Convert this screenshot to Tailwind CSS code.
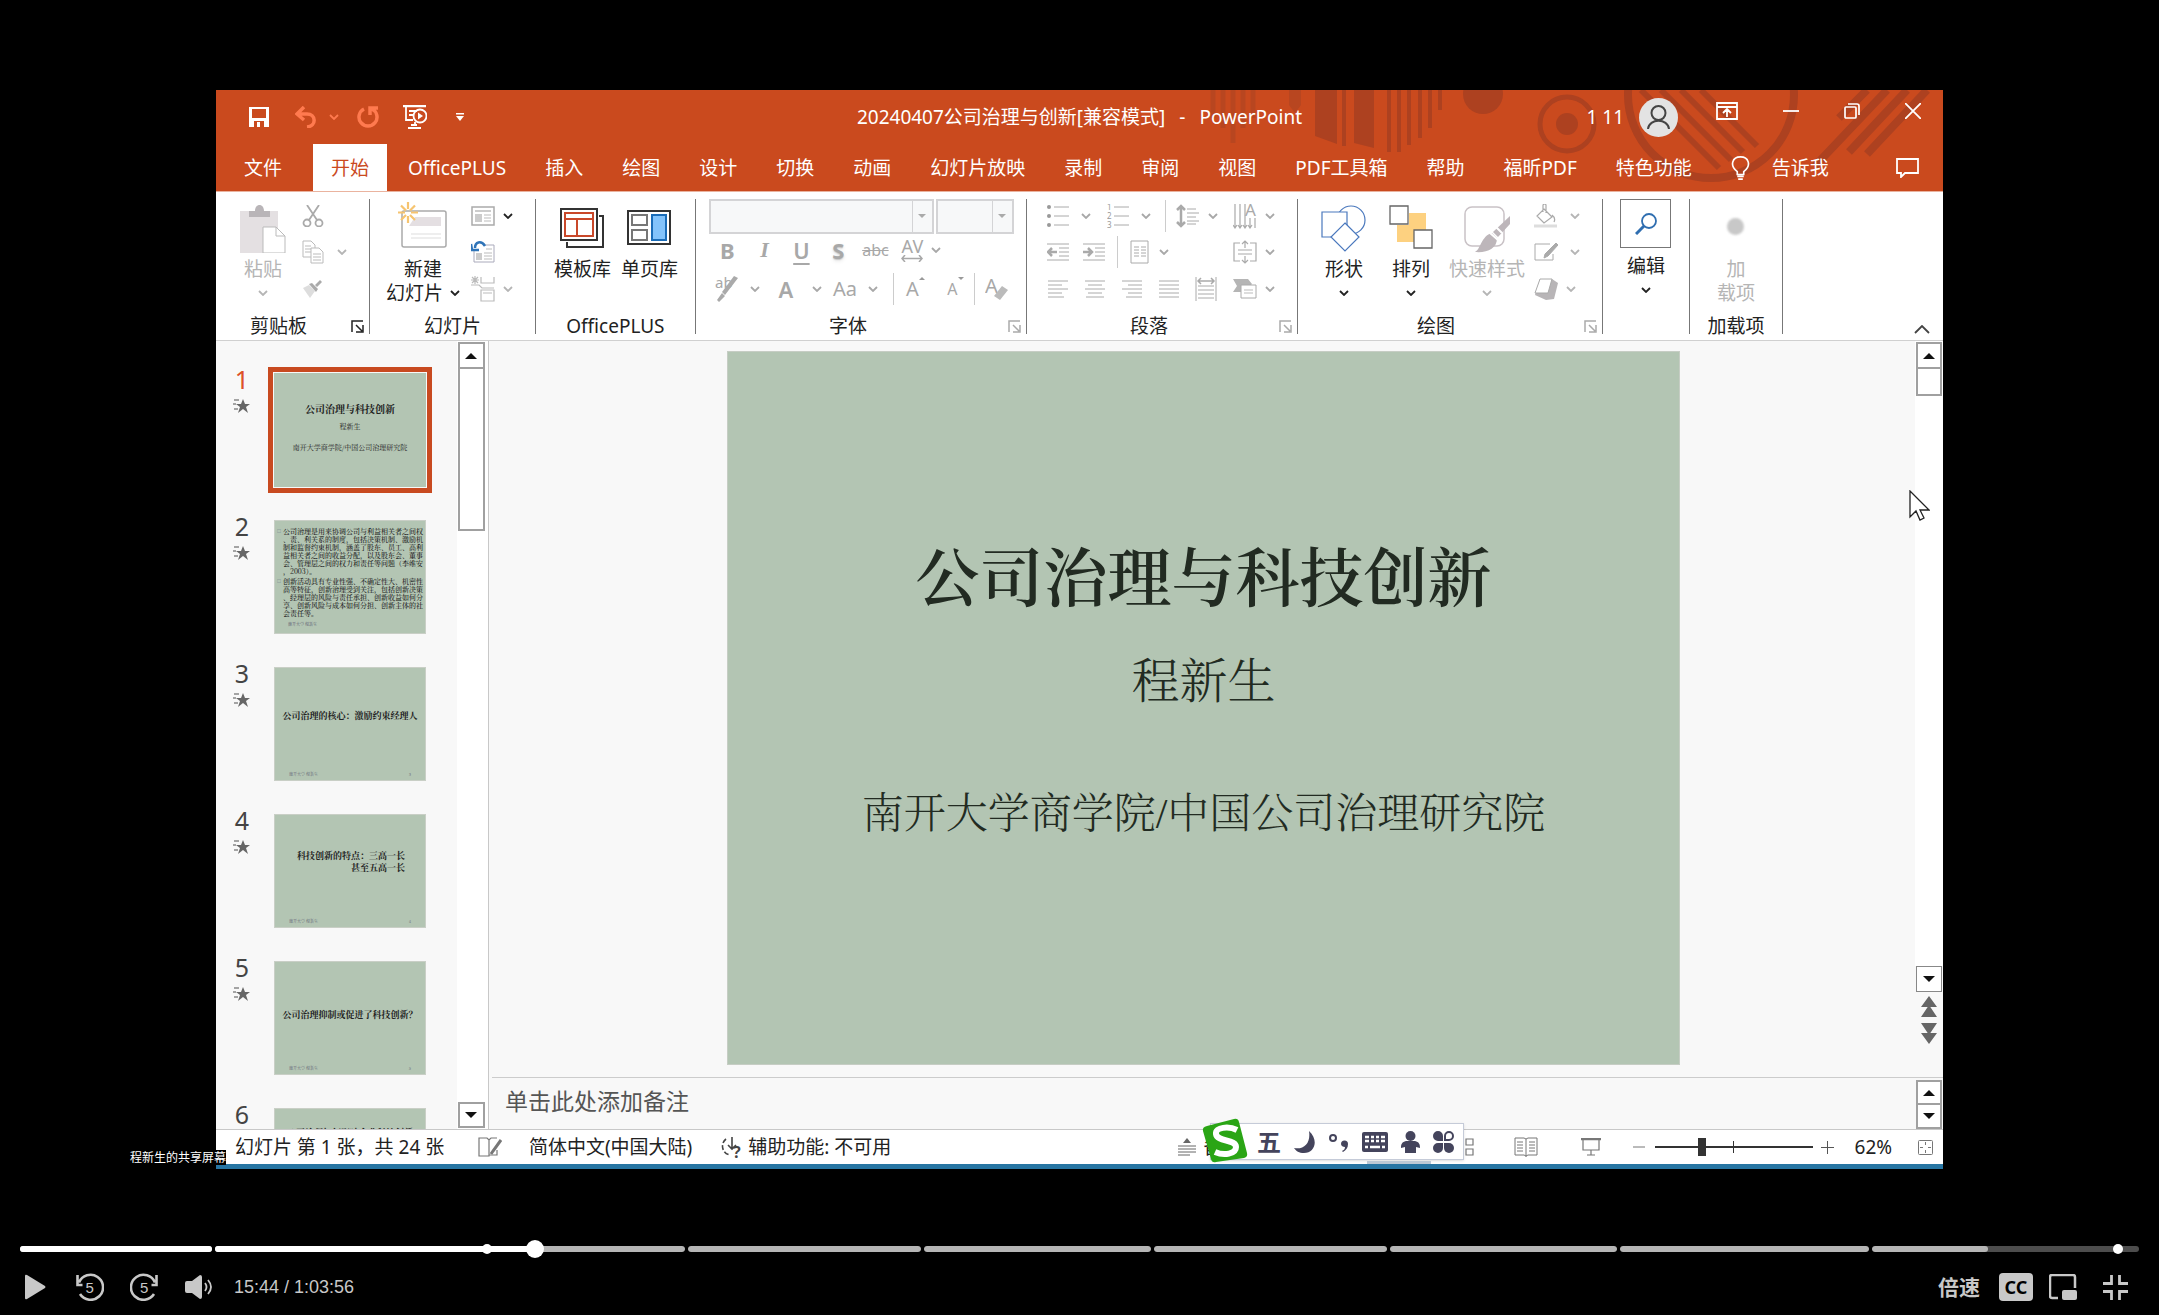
<!DOCTYPE html>
<html lang="zh-CN">
<head>
  <meta charset="UTF-8">
  <meta name="viewport" content="width=device-width, initial-scale=1.0">
  <title>公司治理与科技创新</title>
  <script src="https://cdn.jsdelivr.net/npm/@tailwindcss/browser@4"></script>
</head>
<body class="min-h-screen bg-black flex flex-col font-['Noto_Sans','Noto_Sans_CJK_SC',sans-serif] text-[19px] leading-6 text-[#222]">

  <!-- shared glyphs -->
  <svg class="hidden">
    <symbol id="chev" viewBox="0 0 10 6"><path d="M1 1l4 4 4-4" fill="none" stroke="currentColor" stroke-width="1.8"/></symbol>
    <symbol id="launch" viewBox="0 0 13 13"><path d="M1 12V1h11M5 5l6 6M12 5v7H5" fill="none" stroke="currentColor" stroke-width="1.5"/></symbol>
    <symbol id="up" viewBox="0 0 12 6"><path d="M0 6l6-6 6 6z" fill="#111"/></symbol>
    <symbol id="down" viewBox="0 0 12 6"><path d="M0 0h12L6 6z" fill="#111"/></symbol>
    <symbol id="star" viewBox="0 0 17 14"><path d="M10 0l2 5h5l-4 3 2 6-5-4-5 4 2-6-4-3h5z" fill="#666"/><path d="M1 1h5M0 5h3M1 10h4" stroke="#888" stroke-width="1.3"/></symbol>
  </svg>

  <main class="relative w-4/5 aspect-[16/10] min-h-0 shrink-0 mx-auto mt-[90px] bg-white flex flex-col">

    <header class="relative shrink-0 bg-[#ca4a1e] text-white border-b border-[#eab39f]">
      <svg class="absolute right-0 top-0 w-[760px] h-[102px]" viewBox="0 0 760 102" fill="none" stroke="#ad4120">
        <g stroke-width="5"><path d="M30 0v28M40 0v38M50 0v53M60 0v38M70 0v28" stroke="#b84620"/></g>
        <path d="M106 0h12v15l-6 8-6-8z" fill="#b84620" stroke="none"/>
        <path d="M132 0h22v54l-22-8zM171 0h20v58l-20-5z" fill="#ad4120" stroke="none"/>
        <g stroke-width="4"><path d="M161 0v56M206 0v62M216 0v62M226 0v55M237 0v48M247 0v38M257 0v20"/></g>
        <circle cx="300" cy="4" r="20" fill="#ad4120" stroke="none"/>
        <circle cx="384" cy="34" r="27" stroke-width="5"/>
        <circle cx="384" cy="34" r="11" fill="#ad4120" stroke="none"/>
        <circle cx="528" cy="5" r="83" stroke-width="8"/>
        <g stroke-width="6"><path d="M458 0l78 78M478 0l70 70M498 0l62 62M518 0l56 56"/></g>
        <g stroke-width="8"><path d="M684 0l-28 28M704 0l-72 76M724 0l-58 62M744 0l-60 64"/></g>
      </svg>
      <div class="relative h-[54px] flex items-center">
        <div class="w-[300px] flex items-center pl-[33px]">
          <button aria-label="保存"><svg class="w-5 h-5" viewBox="0 0 20 20"><path d="M0 0h20v20H0z" fill="#fff"/><path d="M3 2h14v9H3zM5 14h10v6H5z" fill="#ca4a1e"/><path d="M8 15h3v5H8z" fill="#fff"/></svg></button>
          <button aria-label="撤消" class="flex items-center gap-3 ml-[26px] text-[#ff7a4f]"><svg class="w-[22px] h-[22px]" viewBox="0 0 22 22" fill="none" stroke="currentColor" stroke-width="3.5"><path d="M9 1L2 8l7 6M2 8h10c9 0 10 12 0 13"/></svg><svg class="w-[10px] h-[6px]"><use href="#chev"/></svg></button>
          <button aria-label="重复" class="ml-[18px] text-[#ff7a4f]"><svg class="w-[22px] h-[22px]" viewBox="0 0 22 22" fill="none" stroke="currentColor" stroke-width="3.5"><path d="M7 3a9 9 0 1 0 8 0M13 9V2h8"/></svg></button>
          <button aria-label="放映" class="ml-6"><svg class="w-6 h-6" viewBox="0 0 24 24" fill="none" stroke="#fff" stroke-width="1.8"><path d="M0 1h23" stroke-width="2.5"/><path d="M3 2v13h7M6 6h8M6 10h4M12 17v4M5 23h13M8 20h6"/><circle cx="17" cy="11" r="6.5"/><path d="M15 7.500l5 3.500-5 3.500z" fill="#fff" stroke="none"/></svg></button>
          <button aria-label="自定义" class="ml-[29px]"><svg class="w-2 h-2" viewBox="0 0 8 8" fill="#fff"><path d="M0 0h8v1.500H0zM0 3h8L4 8z"/></svg></button>
        </div>
        <h1 class="flex-1 flex justify-center gap-[14px] whitespace-nowrap"><span>20240407公司治理与创新[兼容模式]</span><span>-</span><span>PowerPoint</span></h1>
        <div class="w-[300px] flex items-center justify-end pr-[22px]">
          <span class="absolute right-[319px]">1 11</span>
          <svg class="absolute right-[265px] w-[39px] h-[39px]" viewBox="0 0 39 39"><circle cx="19.500" cy="19.500" r="19.500" fill="#e3e3e3"/><g fill="none" stroke="#444" stroke-width="2"><circle cx="19.500" cy="15" r="7"/><path d="M9 31c1-11 20-11 21 0"/></g></svg>
          <div class="flex items-center gap-[45px] pb-3">
            <button aria-label="功能区选项"><svg class="w-[22px] h-[18px]" viewBox="0 0 22 18" fill="none" stroke="#fff" stroke-width="1.800"><path d="M1 1h20v16H1zM1 5h20M11 15V8M7 11l4-4 4 4"/></svg></button>
            <button aria-label="最小化"><svg class="w-4 h-4" viewBox="0 0 16 16"><path d="M0 8h16" stroke="#fff" stroke-width="1.800"/></svg></button>
            <button aria-label="还原"><svg class="w-4 h-4" viewBox="0 0 16 16" fill="none" stroke="#fff" stroke-width="1.700"><rect x="1" y="4" width="11" height="11" rx="1"/><path d="M4 1h9q2 0 2 2v9"/></svg></button>
            <button aria-label="关闭"><svg class="w-4 h-4" viewBox="0 0 16 16"><path d="M0 0l16 16M16 0L0 16" stroke="#fff" stroke-width="1.800"/></svg></button>
          </div>
        </div>
      </div>
      <nav class="relative h-[47px] flex items-center whitespace-nowrap pr-6">
        <a href="#" class="pl-7 pr-[31px]">文件</a>
        <a href="#" class="h-full w-[74px] bg-white text-[#ca4a1e] flex items-center justify-center">开始</a>
        <div class="flex gap-[39px] pl-[21px]">
          <a href="#">OfficePLUS</a>
          <a href="#">插入</a>
          <a href="#">绘图</a>
          <a href="#">设计</a>
          <a href="#">切换</a>
          <a href="#">动画</a>
          <a href="#">幻灯片放映</a>
          <a href="#">录制</a>
          <a href="#">审阅</a>
          <a href="#">视图</a>
          <a href="#">PDF工具箱</a>
          <a href="#">帮助</a>
          <a href="#">福昕PDF</a>
          <a href="#">特色功能</a>
          <a href="#" class="flex items-center gap-[22px]"><svg class="w-[19px] h-6" viewBox="0 0 19 26" fill="none" stroke="#fff" stroke-width="1.800"><path d="M6 20v-3C-3 10 1 1 9.500 1S22 10 13 17v3zM6 22h7M7 25h5"/></svg>告诉我</a>
        </div>
        <button class="ml-auto" aria-label="批注"><svg class="w-[23px] h-[20px]" viewBox="0 0 23 20" fill="none" stroke="#fff" stroke-width="1.800"><path d="M1 1h21v14H9l-4 4v-4H1z"/></svg></button>
      </nav>
    </header>

    <!-- ribbon -->
    <section class="shrink-0 h-[149px] pt-[7px] pb-[6px] flex border-b border-[#d0d0d0] whitespace-nowrap">
      <div class="w-[154px] border-r border-[#777] flex flex-col">
        <div class="flex-1 flex pl-[21px]">
          <button class="w-[52px] pt-[6px] flex flex-col items-center text-[#b5b5b5]">
            <svg class="w-[46px] h-12" viewBox="0 0 46 48"><path d="M0 6h38v44H0z" fill="#e4e0e2"/><path d="M9 12V6h6c0-8 9-8 9 0h6v6z" fill="#b9b5b8"/><path d="M23 22h13l9 9v17H23z" fill="#fff" stroke="#bbb"/><path d="M36 22v9h9" fill="none" stroke="#bbb"/></svg>
            <span class="mt-1">粘贴</span>
            <span class="h-6 flex items-center"><svg class="w-[10px] h-[6px]"><use href="#chev"/></svg></span>
          </button>
          <div class="grid grid-rows-[34px_37px_37px] items-center pl-[13px] text-[#b5b5b5]">
            <button aria-label="剪切"><svg class="w-[22px] h-[22px]" viewBox="0 0 22 22" fill="none" stroke="#aaa" stroke-width="1.800"><path d="M5 0l10 15M17 0L7 15"/><circle cx="5" cy="18" r="3.500"/><circle cx="17" cy="18" r="3.500"/></svg></button>
            <button aria-label="复制" class="flex items-center gap-[13px]"><svg class="w-[22px] h-6" viewBox="0 0 22 24" fill="#fff" stroke="#bbb"><path d="M1 1h8l4 4v12H1zM3 6h6M3 9h7M3 12h7"/><path d="M9 8h8l4 4v11H9zM11 14h8M11 17h8M11 20h8"/></svg><svg class="w-[10px] h-[6px]"><use href="#chev"/></svg></button>
            <button aria-label="格式刷"><svg class="w-5 h-[18px]" viewBox="0 0 20 18"><path d="M1 8l6-3 6 6-5 7z" fill="#ddd"/><path d="M7 4l3-1 6 6-2 3zM13 5l5-5 2 2-5 5z" fill="#aaa"/></svg></button>
          </div>
        </div>
        <div class="h-4 leading-4 flex items-center pl-[34px]">剪贴板<svg class="w-[13px] h-[13px] ml-auto mr-[5px]"><use href="#launch"/></svg></div>
      </div>

      <div class="w-[166px] border-r border-[#777] flex flex-col">
        <div class="flex-1 flex pl-[11px]">
          <button class="w-[84px] pt-[3px] flex flex-col items-center">
            <svg class="w-[50px] h-[51px]" viewBox="0 0 50 51"><rect x="4" y="9" width="44" height="36" rx="2" fill="#fff" stroke="#aaa" stroke-width="1.500"/><path d="M17 15h26v9H11z" fill="#e4dfe2"/><path d="M13 32h30M13 36h30" stroke="#ddd"/><g stroke="#f6c470" stroke-width="2.200"><path d="M10 0v7M10 14v7M0 10.500h7M13 10.500h7M3 3.500l5 5M12 13l5 5M17 3.500l-5 5M8 13l-5 5"/></g></svg>
            <span class="mt-1">新建</span>
            <span class="flex items-center gap-[7px]">幻灯片<svg class="w-[10px] h-[6px]"><use href="#chev"/></svg></span>
          </button>
          <div class="grid grid-rows-[34px_37px_37px] items-center pl-[6px]">
            <button aria-label="版式" class="flex items-center gap-2"><svg class="w-6 h-[20px]" viewBox="0 0 24 20"><rect x="1" y="1" width="22" height="18" fill="#fff" stroke="#aaa" stroke-width="1.500"/><path d="M4 4h16v2H4zM4 8h7v8H4z" fill="#ccc"/><path d="M13 9h7M13 12h7M13 15h7" stroke="#bbb"/></svg><svg class="w-[10px] h-[6px]"><use href="#chev"/></svg></button>
            <button aria-label="重置"><svg class="w-6 h-[22px]" viewBox="0 0 24 22"><path d="M3 8v13h20V4H13" fill="#fff" stroke="#aab"/><path d="M5 12h6v7H5z" fill="#ccc"/><path d="M13 12h8M13 15h8M13 18h8M15 8h6" stroke="#bbb"/><path d="M14 5C10-1 4 1 4 7M0 3l1 6h7" fill="none" stroke="#2f74b8" stroke-width="2.500"/></svg></button>
            <button aria-label="节" class="flex items-center gap-2 text-[#b5b5b5]"><svg class="w-6 h-[26px]" viewBox="0 0 24 26" fill="none" stroke="#bbb" stroke-width="1.200"><path d="M10 1v6h13V1M0 9h8l3 3h12M10 14h13v11H10zM12 17h9M4 0v8M0 4h8M1 1l6 6M7 1L1 7"/></svg><svg class="w-[10px] h-[6px]"><use href="#chev"/></svg></button>
          </div>
        </div>
        <div class="h-4 leading-4 text-center">幻灯片</div>
      </div>

      <div class="w-[160px] border-r border-[#777] flex flex-col">
        <div class="flex-1 flex pl-[13px]">
          <button class="w-[67px] pt-[6px] flex flex-col items-center">
            <svg class="w-[46px] h-12" viewBox="0 0 46 48" fill="none" stroke="#333" stroke-width="2"><path d="M2 4h36v31H2z"/><path d="M40 11h4v31H8v-5"/><path d="M6 8h28v23H6zM6 14h28M18 14v17" stroke="#c9482a"/></svg>
            <span class="mt-1">模板库</span>
          </button>
          <button class="w-[67px] pt-[6px] flex flex-col items-center">
            <svg class="w-[46px] h-12" viewBox="0 0 46 48" fill="none" stroke="#333" stroke-width="2"><path d="M2 6h42v33H2z"/><path d="M6 10h15v10H6zM6 25h15v10H6z" stroke="#777"/><path d="M26 10h14v25H26z" fill="#83c3fb" stroke="#1a6cb8"/></svg>
            <span class="mt-1">单页库</span>
          </button>
        </div>
        <div class="h-4 leading-4 text-center">OfficePLUS</div>
      </div>

      <div class="w-[331px] border-r border-[#777] flex flex-col">
        <div class="flex-1 grid grid-rows-[34px_37px_37px] content-start items-center pl-[13px] text-[#a8a8a8]">
          <div class="flex gap-[2px] h-[35px]">
            <div class="flex w-[225px] border-2 border-[#d4d4d6] bg-[#f7f8f9]"><select aria-label="字体" disabled class="appearance-none flex-1"></select><span class="w-5 border-l border-[#d4d4d6] flex items-center justify-center"><svg class="w-2 h-1" viewBox="0 0 8 4"><path d="M0 0h8L4 4z" fill="#aaa"/></svg></span></div>
            <div class="flex w-[78px] border-2 border-[#d4d4d6] bg-[#f7f8f9]"><select aria-label="字号" disabled class="appearance-none flex-1"></select><span class="w-5 border-l border-[#d4d4d6] flex items-center justify-center"><svg class="w-2 h-1" viewBox="0 0 8 4"><path d="M0 0h8L4 4z" fill="#aaa"/></svg></span></div>
          </div>
          <div class="flex items-center text-[22px] pb-1">
            <button class="w-[37px] font-bold">B</button>
            <button class="w-[37px] italic font-bold font-['Liberation_Serif',serif]">I</button>
            <button class="w-[37px] underline underline-offset-4 font-semibold">U</button>
            <button class="w-[37px] font-bold text-shadow-md">S</button>
            <button class="w-[37px] line-through text-[16px]">abc</button>
            <button class="w-[37px] flex flex-col items-center text-[18px] leading-[18px]">AV<svg class="w-[22px] h-[7px]" viewBox="0 0 22 7" fill="none" stroke="currentColor" stroke-width="1.500"><path d="M1 3.500h20M4 0L1 3.500 4 7M18 0l3 3.500L18 7"/></svg></button>
            <svg class="w-[10px] h-[6px]"><use href="#chev"/></svg>
          </div>
          <div class="flex items-center text-[22px]">
            <button class="w-[37px] pl-[6px]" aria-label="突出显示"><svg class="w-6 h-[28px]" viewBox="0 0 24 28"><text x="0" y="13" font-size="15" fill="currentColor">ab</text><path d="M23 3l-13 17-3-3L19 1zM7 18l3 3-6 6-2-2z" fill="#aaa"/></svg></button>
            <span class="w-[18px] flex justify-center"><svg class="w-[10px] h-[6px]"><use href="#chev"/></svg></span>
            <button class="w-11 font-semibold">A</button>
            <span class="w-[18px] flex justify-center"><svg class="w-[10px] h-[6px]"><use href="#chev"/></svg></span>
            <button class="w-[38px] text-[20px]">Aa</button>
            <span class="w-[18px] flex justify-center"><svg class="w-[10px] h-[6px]"><use href="#chev"/></svg></span>
            <span class="w-px h-8 ml-[11px] bg-[#ccc]"></span>
            <button class="w-[43px] flex justify-center text-[20px]">A<svg class="w-[6px] h-[3px]" viewBox="0 0 6 3"><path d="M0 3l3-3 3 3z" fill="#999"/></svg></button>
            <button class="w-[37px] flex justify-center text-[16px]">A<svg class="w-[6px] h-[3px]" viewBox="0 0 6 3"><path d="M0 0h6L3 3z" fill="#999"/></svg></button>
            <span class="w-px h-8 bg-[#ccc]"></span>
            <button class="w-11 flex justify-center" aria-label="清除格式"><svg class="w-6 h-7" viewBox="0 0 24 28"><text x="0" y="18" font-size="20" fill="currentColor">A</text><path d="M17 11l6 4-8 10-6-4z" fill="#bbb"/></svg></button>
          </div>
        </div>
        <div class="h-4 leading-4 flex items-center pl-[133px]">字体<svg class="w-[13px] h-[13px] ml-auto mr-[5px] text-[#aaa]"><use href="#launch"/></svg></div>
      </div>

      <div class="w-[271px] border-r border-[#777] flex flex-col">
        <div class="flex-1 grid grid-rows-[34px_37px_37px] content-start items-center pl-5 pr-[14px] text-[#a8a8a8]">
          <div class="flex items-center">
            <button aria-label="项目符号"><svg class="w-[22px] h-[22px]" viewBox="0 0 22 22" stroke="#aaa"><path d="M7 2h15M7 11h15M7 20h15"/><g fill="#999" stroke="none"><circle cx="2" cy="2" r="2"/><circle cx="2" cy="11" r="2"/><circle cx="2" cy="20" r="2"/></g></svg></button>
            <span class="w-[34px] flex justify-center"><svg class="w-[10px] h-[6px]"><use href="#chev"/></svg></span>
            <button aria-label="编号" class="ml-1"><svg class="w-[22px] h-6" viewBox="0 0 22 24" stroke="#aaa"><path d="M7 3h15M7 12h15M7 21h15"/><g fill="#999" stroke="none" font-size="8"><text x="0" y="6">1</text><text x="0" y="15">2</text><text x="0" y="24">3</text></g></svg></button>
            <span class="w-[34px] flex justify-center"><svg class="w-[10px] h-[6px]"><use href="#chev"/></svg></span>
            <span class="w-px h-8 mx-[2px] bg-[#ccc]"></span>
            <button aria-label="行距" class="ml-2"><svg class="w-[23px] h-6" viewBox="0 0 23 24" fill="none" stroke="#aaa"><path d="M5 2v20M1 6l4-4 4 4M1 18l4 4 4-4" stroke-width="2.500"/><path d="M11 5h9M11 9h12M11 13h9M11 17h12M11 20h9"/></svg></button>
            <span class="w-7 flex justify-center"><svg class="w-[10px] h-[6px]"><use href="#chev"/></svg></span>
            <button aria-label="文字方向" class="ml-auto"><svg class="w-6 h-[26px]" viewBox="0 0 24 26" fill="none" stroke="#aaa" stroke-width="1.200"><path d="M2 1v24M7 1v24M12 1v24M17 15v10M22 15v10M0 22l2 3 2-3M5 22l2 3 2-3M10 22l2 3 2-3M15 22l2 3 2-3"/><text x="12" y="13" font-size="17" fill="#aaa" stroke="none">A</text></svg></button>
            <span class="w-[26px] flex justify-center"><svg class="w-[10px] h-[6px]"><use href="#chev"/></svg></span>
          </div>
          <div class="flex items-center">
            <button aria-label="减少缩进"><svg class="w-[22px] h-[18px]" viewBox="0 0 22 18" fill="none" stroke="#aaa"><path d="M0 1h22M12 5h10M12 9h10M12 13h10M0 17h22"/><path d="M1 9h9M5 5L1 9l4 4" stroke-width="2.500"/></svg></button>
            <button aria-label="增加缩进" class="ml-[14px]"><svg class="w-[22px] h-[18px]" viewBox="0 0 22 18" fill="none" stroke="#aaa"><path d="M0 1h22M12 5h10M12 9h10M12 13h10M0 17h22"/><path d="M0 9h9M5 5l4 4-4 4" stroke-width="2.500"/></svg></button>
            <span class="w-px h-8 mx-3 bg-[#ccc]"></span>
            <button aria-label="分栏"><svg class="w-[19px] h-6" viewBox="0 0 19 24" fill="none" stroke="#aaa"><path d="M1 1h17v22H1zM4 7h5M11 7h5M4 10h5M11 10h5M4 13h5M11 13h5M4 16h5M11 16h5"/></svg></button>
            <span class="w-[30px] flex justify-center"><svg class="w-[10px] h-[6px]"><use href="#chev"/></svg></span>
            <button aria-label="对齐文本" class="ml-auto"><svg class="w-6 h-6" viewBox="0 0 24 24" fill="none" stroke="#aaa" stroke-width="1.200"><path d="M7 3H1v18h6M17 3h6v18h-6M5 10h14M5 14h14M12 1v7M9 4l3-3 3 3M12 16v7M9 20l3 3 3-3"/></svg></button>
            <span class="w-[26px] flex justify-center"><svg class="w-[10px] h-[6px]"><use href="#chev"/></svg></span>
          </div>
          <div class="flex items-center gap-[15px]">
            <button aria-label="左对齐"><svg class="w-[22px] h-[18px]" viewBox="0 0 22 18" stroke="#aaa"><path d="M1 1h20M1 5h14M1 9h20M1 13h14M1 17h16"/></svg></button>
            <button aria-label="居中"><svg class="w-[22px] h-[18px]" viewBox="0 0 22 18" stroke="#aaa"><path d="M1 1h20M4 5h14M1 9h20M4 13h14M2 17h18"/></svg></button>
            <button aria-label="右对齐"><svg class="w-[22px] h-[18px]" viewBox="0 0 22 18" stroke="#aaa"><path d="M1 1h20M7 5h14M1 9h20M7 13h14M5 17h16"/></svg></button>
            <button aria-label="两端对齐"><svg class="w-[22px] h-[18px]" viewBox="0 0 22 18" stroke="#aaa"><path d="M1 1h20M1 5h20M1 9h20M1 13h20M1 17h20"/></svg></button>
            <button aria-label="分散对齐"><svg class="w-[22px] h-6" viewBox="0 0 22 24" fill="none" stroke="#aaa"><path d="M1 0v24M21 0v24M3 9h16M3 13h16M3 17h16M3 21h16"/><path d="M3 4h16M6 1L3 4l3 3M16 1l3 3-3 3" stroke-width="1.500"/></svg></button>
            <span class="ml-auto flex items-center"><svg class="w-6 h-[20px]" viewBox="0 0 24 20"><path d="M0 0h15l4 5-8 8H0l4-6z" fill="#b5b5b5"/><path d="M8 6h15v13H8z" fill="#fff" stroke="#aaa"/><path d="M11 11h9M11 14h9" stroke="#bbb"/></svg>
            <span class="w-[26px] flex justify-center"><svg class="w-[10px] h-[6px]"><use href="#chev"/></svg></span></span>
          </div>
        </div>
        <div class="h-4 leading-4 flex items-center pl-[103px]">段落<svg class="w-[13px] h-[13px] ml-auto mr-[5px] text-[#aaa]"><use href="#launch"/></svg></div>
      </div>

      <div class="w-[305px] border-r border-[#777] flex flex-col">
        <div class="flex-1 flex pl-3">
          <button class="w-[68px] pt-[6px] flex flex-col items-center">
            <svg class="w-[46px] h-12" viewBox="0 0 46 48" fill="#fff" stroke="#4a78bd" stroke-width="1.200"><circle cx="30" cy="15" r="14"/><path d="M1 7h25v25H1z"/><path d="M24 18l14 14-14 14-14-14z"/></svg>
            <span class="mt-1">形状</span>
            <span class="h-6 flex items-center"><svg class="w-[10px] h-[6px]"><use href="#chev"/></svg></span>
          </button>
          <button class="w-[66px] pt-[6px] flex flex-col items-center">
            <svg class="w-[44px] h-12" viewBox="0 0 44 48"><path d="M20 8h17v17H20zM8 20h17v17H8z" fill="#fdd180"/><path d="M1 1h18v18H1zM25 25h18v18H25z" fill="#fff" stroke="#666" stroke-width="1.300"/></svg>
            <span class="mt-1">排列</span>
            <span class="h-6 flex items-center"><svg class="w-[10px] h-[6px]"><use href="#chev"/></svg></span>
          </button>
          <button class="w-[86px] pt-[6px] flex flex-col items-center text-[#b5b5b5]">
            <svg class="w-[46px] h-12" viewBox="0 0 46 48"><rect x="1" y="2" width="39" height="39" rx="7" fill="#fff" stroke="#c9c2c6" stroke-width="1.500"/><path d="M46 11v8L34 32l-5-5zM28 28l5 5c0 11-10 15-22 14 6-3 6-16 17-19z" fill="#bdb6ba"/><path d="M26 28l8 7M32 22l6 6" stroke="#fff" stroke-width="2"/></svg>
            <span class="mt-1">快速样式</span>
            <span class="h-6 flex items-center"><svg class="w-[10px] h-[6px]"><use href="#chev"/></svg></span>
          </button>
          <div class="grid grid-rows-[34px_37px_37px] items-center pl-1 text-[#b5b5b5]">
            <button aria-label="填充" class="flex items-center gap-3"><svg class="w-6 h-6" viewBox="0 0 24 24" fill="none" stroke="#aaa" stroke-width="1.200"><path d="M10 5l8 8-8 6-7-7zM9 8V1q2-2 3 0v8M18 11q4 3 2 7"/><path d="M0 22h23" stroke="#ddd" stroke-width="3"/></svg><svg class="w-[10px] h-[6px]"><use href="#chev"/></svg></button>
            <button aria-label="轮廓" class="flex items-center gap-3"><svg class="w-6 h-5" viewBox="0 0 24 20" fill="none" stroke="#aaa"><path d="M16 2H1v16h18v-6"/><path d="M22 1l2 2-10 11-4 2 1-4z" fill="#aaa"/></svg><svg class="w-[10px] h-[6px]"><use href="#chev"/></svg></button>
            <button aria-label="效果" class="flex items-center gap-2"><svg class="w-6 h-[22px]" viewBox="0 0 24 22"><path d="M6 1h12l6 4-4 16-8 1-11-5z" fill="#b8b5b7"/><path d="M6 1h12l-4 14H1z" fill="#fff" stroke="#aaa"/></svg><svg class="w-[10px] h-[6px]"><use href="#chev"/></svg></button>
          </div>
        </div>
        <div class="h-4 leading-4 flex items-center pl-[119px]">绘图<svg class="w-[13px] h-[13px] ml-auto mr-[5px] text-[#aaa]"><use href="#launch"/></svg></div>
      </div>

      <div class="w-[87px] border-r border-[#777]">
        <button class="w-full flex flex-col items-center">
          <span class="w-[51px] h-[49px] mb-[6px] border border-[#777] flex items-center justify-center"><svg class="w-[22px] h-[22px]" viewBox="0 0 22 22" fill="none" stroke="#2f6eb0" stroke-width="1.800"><circle cx="14" cy="8" r="7"/><path d="M9 13l-8 8" stroke-width="3"/></svg></span>
          编辑
          <span class="h-6 flex items-center"><svg class="w-[10px] h-[6px]"><use href="#chev"/></svg></span>
        </button>
      </div>

      <div class="w-[93px] border-r border-[#777] flex flex-col">
        <button class="flex-1 pt-[6px] flex flex-col items-center text-[#b5b5b5]">
          <span class="h-12 flex items-center pb-[6px]"><span class="size-[17px] rounded-full bg-[#c8c8c8] blur-[1px]"></span></span>
          <span class="mt-1">加</span>
          <span>载项</span>
        </button>
        <div class="h-4 leading-4 text-center">加载项</div>
      </div>
      <button aria-label="折叠功能区" class="ml-auto mr-[13px] self-end"><svg class="w-4 h-[9px]" viewBox="0 0 16 9"><path d="M1 8l7-7 7 7" fill="none" stroke="#444" stroke-width="1.800"/></svg></button>
    </section>

    <!-- work area -->
    <section class="flex-1 min-h-0 flex bg-[#f8f8f8]">
      <aside class="w-[273px] shrink-0 flex border-r border-[#c8c8c8] overflow-hidden">
        <ol class="flex-1 pl-[14px] pt-8 flex flex-col gap-[33px] text-[25px] leading-6 text-[#444]">
          <li class="flex gap-5">
            <div class="w-6 flex flex-col items-center text-[#dd5129]"><span class="-mt-[6px]">1</span><svg class="w-[17px] h-[14px] mt-2"><use href="#star"/></svg></div>
            <div class="w-[152px] h-[114px] shrink-0 bg-[#b3c5b3] outline-[5px] outline-offset-1 outline-[#c84a20] text-[#222] flex flex-col items-center pt-[29px] text-[7px] font-['Noto_Serif_CJK_SC',serif] whitespace-nowrap">
              <b class="text-[10px] leading-[14px]">公司治理与科技创新</b>
              <span class="leading-[10px] mt-[5px]">程新生</span>
              <span class="leading-[10px] mt-[11px]">南开大学商学院/中国公司治理研究院</span>
            </div>
          </li>
          <li class="flex gap-5">
            <div class="w-6 flex flex-col items-center"><span class="-mt-[6px]">2</span><svg class="w-[17px] h-[14px] mt-2"><use href="#star"/></svg></div>
            <div class="w-[152px] h-[114px] shrink-0 bg-[#b3c5b3] border border-[#c9cfc6] text-[#222] pt-[6px] pl-[2px] text-[7px] leading-[8px] whitespace-nowrap font-['Noto_Serif_CJK_SC',serif] font-medium">
              <div class="flex"><span class="w-[6px] text-[4px] text-[#678]">□</span><p>公司治理是用来协调公司与利益相关者之间权<br>、责、利关系的制度，包括决策机制、激励机<br>制和监督约束机制，涵盖了股东、员工、高利<br>益相关者之间的收益分配，以及股东会、董事<br>会、管理层之间的权力和责任等问题（李维安<br>，2003）。</p></div>
              <div class="flex mt-[2px]"><span class="w-[6px] text-[4px] text-[#678]">□</span><p>创新活动具有专业性强、不确定性大、机密性<br>高等特征，创新治理受到关注，包括创新决策<br>、经理层的风险与责任承担、创新收益如何分<br>享、创新风险与成本如何分担、创新主体的社<br>会责任等。</p></div>
              <p class="text-[4px] mt-[3px] pl-[11px] text-[#667]">南开大学 程新生</p>
            </div>
          </li>
          <li class="flex gap-5">
            <div class="w-6 flex flex-col items-center"><span class="-mt-[6px]">3</span><svg class="w-[17px] h-[14px] mt-2"><use href="#star"/></svg></div>
            <div class="w-[152px] h-[114px] shrink-0 bg-[#b3c5b3] border border-[#c9cfc6] text-[#222] flex flex-col pt-[42px] text-[9px] leading-3 whitespace-nowrap font-['Noto_Serif_CJK_SC',serif]">
              <b class="text-center">公司治理的核心：激励约束经理人</b>
              <p class="mt-auto px-[14px] flex justify-between text-[4px] text-[#667]"><span>南开大学 程新生</span><span>3</span></p>
            </div>
          </li>
          <li class="flex gap-5">
            <div class="w-6 flex flex-col items-center"><span class="-mt-[6px]">4</span><svg class="w-[17px] h-[14px] mt-2"><use href="#star"/></svg></div>
            <div class="w-[152px] h-[114px] shrink-0 bg-[#b3c5b3] border border-[#c9cfc6] text-[#222] flex flex-col pt-[35px] text-[9px] leading-3 whitespace-nowrap font-['Noto_Serif_CJK_SC',serif]">
              <b class="text-right pr-5">科技创新的特点：三高一长<br>甚至五高一长</b>
              <p class="mt-auto px-[14px] flex justify-between text-[4px] text-[#667]"><span>南开大学 程新生</span><span>4</span></p>
            </div>
          </li>
          <li class="flex gap-5">
            <div class="w-6 flex flex-col items-center"><span class="-mt-[6px]">5</span><svg class="w-[17px] h-[14px] mt-2"><use href="#star"/></svg></div>
            <div class="w-[152px] h-[114px] shrink-0 bg-[#b3c5b3] border border-[#c9cfc6] text-[#222] flex flex-col pt-[47px] text-[9px] leading-3 whitespace-nowrap font-['Noto_Serif_CJK_SC',serif]">
              <b class="text-center">公司治理抑制或促进了科技创新？</b>
              <p class="mt-auto px-[14px] flex justify-between text-[4px] text-[#667]"><span>南开大学 程新生</span><span>5</span></p>
            </div>
          </li>
          <li class="flex gap-5">
            <div class="w-6 flex flex-col items-center"><span class="-mt-[6px]">6</span></div>
            <div class="w-[152px] h-[114px] shrink-0 bg-[#b3c5b3] border border-[#c9cfc6] text-[#222] pt-[18px] text-[9px] leading-3 text-center whitespace-nowrap font-['Noto_Serif_CJK_SC',serif]"><b>公司治理如何影响企业科技创新</b></div>
          </li>
        </ol>
        <div class="w-[31px] bg-white flex flex-col pl-px pr-[3px] pt-px">
          <button aria-label="向上" class="h-[27px] border-2 border-[#a0a0a0] flex items-center justify-center"><svg class="w-3 h-[6px]"><use href="#up"/></svg></button>
          <div class="h-[162px] border-2 border-t-0 border-[#a0a0a0]"></div>
          <button aria-label="向下" class="mt-auto mb-px h-[26px] border-2 border-[#a0a0a0] flex items-center justify-center"><svg class="w-3 h-[6px]"><use href="#down"/></svg></button>
        </div>
      </aside>

      <div class="flex-1 min-w-0 flex flex-col pl-[3px]">
        <div class="flex-1 min-h-0 flex">
          <div class="flex-1 min-h-0 flex justify-center pt-[10px] pb-3">
            <article class="h-full aspect-[4/3] bg-[#b3c5b3] border border-[#c6cdc4] text-[#222b22] flex flex-col items-center pt-48 whitespace-nowrap font-['Liberation_Serif','Noto_Serif_CJK_SC',serif]">
              <h2 class="text-[64px] leading-[72px] font-semibold">公司治理与科技创新</h2>
              <p class="text-[48px] leading-[56px] mt-[38px] font-light">程新生</p>
              <p class="text-[42px] leading-[48px] mt-20 font-light">南开大学商学院/中国公司治理研究院</p>
            </article>
          </div>
          <div class="w-7 flex flex-col">
            <div class="flex-1 bg-white px-px pt-px">
              <button aria-label="向上" class="w-full h-[27px] border-2 border-[#a0a0a0] flex items-center justify-center"><svg class="w-3 h-[6px]"><use href="#up"/></svg></button>
              <div class="h-[27px] border-2 border-t-0 border-[#a0a0a0]"></div>
            </div>
            <button aria-label="向下" class="h-[26px] mx-px bg-white border border-[#888] flex items-center justify-center"><svg class="w-3 h-[6px]"><use href="#down"/></svg></button>
            <div class="h-[85px] flex flex-col items-center gap-[6px] pt-1">
              <button aria-label="上一张"><svg class="w-4 h-[21px] block" viewBox="0 0 16 21" fill="#666"><path d="M8 0l8 11H0zM8 9l8 12H0z"/></svg></button>
              <button aria-label="下一张"><svg class="w-4 h-[21px] block" viewBox="0 0 16 21" fill="#666"><path d="M8 21l8-11H0zM8 12l8-12H0z"/></svg></button>
            </div>
          </div>
        </div>
        <div class="h-[52px] shrink-0 border-t border-[#ccc] flex pl-[13px]">
          <input aria-label="备注" placeholder="单击此处添加备注" class="flex-1 pb-[5px] text-[23px] placeholder:text-[#555] outline-none">
          <div class="w-7 px-px pt-[2px] flex flex-col">
            <button aria-label="向上" class="h-[25px] bg-white border-2 border-[#a0a0a0] flex items-center justify-center"><svg class="w-3 h-[6px]"><use href="#up"/></svg></button>
            <button aria-label="向下" class="h-6 bg-white border-2 border-t-0 border-[#a0a0a0] flex items-center justify-center"><svg class="w-3 h-[6px]"><use href="#down"/></svg></button>
          </div>
        </div>
      </div>
    </section>

    <footer class="shrink-0 h-10 border-t border-[#c8c8c8] border-b-5 border-b-[#2775a3] flex items-center pl-[19px] pr-[10px] whitespace-nowrap">
      <span class="w-[243px]">幻灯片 第 1 张，共 24 张</span>
      <svg class="w-6 h-5" viewBox="0 0 24 20" fill="none" stroke="#777" stroke-width="1.200"><path d="M11 2v17H1V1h8l2 2 2-2h6M11 18h8v-5"/><path d="M23 3L15 14l-2 3" stroke-width="3"/></svg>
      <span class="ml-[27px]">简体中文(中国大陆)</span>
      <svg class="w-6 h-[22px] ml-[27px]" viewBox="0 0 24 22" fill="none" stroke="#444" stroke-width="1.600"><path d="M13 1v11M9 9l4 4 4-4"/><path d="M7 3a9 9 0 0 0 4 16" stroke-dasharray="5 2"/><text x="14" y="22" font-size="16" font-weight="bold" fill="#444" stroke="none">?</text></svg>
      <span class="ml-[5px]">辅助功能: 不可用</span>
      <button class="ml-auto flex items-center gap-2"><svg class="w-[18px] h-5" viewBox="0 0 18 20" stroke="#666"><path d="M0 9h18M0 12h18M0 15h18M0 18h12"/><path d="M5 6l4-5 4 5z" fill="#666" stroke="none"/></svg>备注</button>
      <svg class="w-5 h-[18px] ml-[212px]" viewBox="0 0 20 18" fill="none" stroke="#777" stroke-width="1.200"><path d="M1 1h7v6H1zM12 1h7v6h-7zM1 11h7v6H1zM12 11h7v6h-7z"/></svg>
      <svg class="w-6 h-5 ml-10" viewBox="0 0 24 20" fill="none" stroke="#777"><path d="M12 2v18M12 2L10 1H1v17h9l2 1 2-1h9V1h-9zM3 5h6M3 8h6M3 11h6M3 14h6M15 5h6M15 8h6M15 11h6M15 14h6"/></svg>
      <svg class="w-5 h-[18px] ml-[43px]" viewBox="0 0 20 18" fill="none" stroke="#777" stroke-width="1.200"><path d="M0 1h20" stroke-width="2.500"/><path d="M2 2v10h16V2M10 12v5M6 17h8"/></svg>
      <button aria-label="缩小" class="ml-8"><svg class="w-3 h-3" viewBox="0 0 12 12"><path d="M0 6h12" stroke="#777"/></svg></button>
      <div class="relative ml-[10px] flex">
        <span class="absolute left-[78px] top-[3px] w-px h-3 bg-[#333]"></span>
        <input type="range" aria-label="缩放" value="29" class="appearance-none w-[158px] h-[18px] bg-linear-to-r from-[#333] to-[#333] bg-[length:100%_2px] bg-center bg-no-repeat [&::-webkit-slider-thumb]:appearance-none [&::-webkit-slider-thumb]:w-2 [&::-webkit-slider-thumb]:h-[18px] [&::-webkit-slider-thumb]:bg-[#333]">
      </div>
      <button aria-label="放大" class="ml-2"><svg class="w-[13px] h-[13px]" viewBox="0 0 13 13"><path d="M0 6.500h13M6.500 0v13" stroke="#555"/></svg></button>
      <span class="ml-[21px]">62%</span>
      <svg class="w-[15px] h-[15px] ml-[26px]" viewBox="0 0 15 15" fill="none" stroke="#777"><rect x=".5" y=".5" width="14" height="14" rx="1"/><path d="M7.500 2v3M7.500 10v3M2 7.500h3M10 7.500h3"/></svg>
    </footer>

    <!-- input method bar floating over the status bar -->
    <div class="absolute right-[479px] bottom-[9px] w-[254px] h-[37px] bg-white border border-[#c5cbd8] shadow-sm flex items-center justify-between pl-[46px] pr-[9px] text-[#44445c]">
      <svg class="absolute -left-[9px] -top-[6px] w-[46px] h-[45px]" viewBox="0 0 46 45"><path d="M5 8L32 1q4-1 5 3l8 31q1 4-3 5l-28 4q-4 1-5-3L1 13q-1-4 4-5z" fill="#2aa515"/><path d="M35 12c-8-4-22-3-21 4 1 8 20 5 20 13 0 7-12 9-21 5" fill="none" stroke="#fff" stroke-width="6"/></svg>
      <span class="text-[24px] font-bold">五</span>
      <svg class="w-[22px] h-[22px]" viewBox="0 0 22 22" fill="currentColor"><path d="M15 0c10 9 6 22-5 22C5 22 2 20 0 17c10 2 17-5 15-17z"/></svg>
      <svg class="w-[19px] h-[20px]" viewBox="0 0 19 20" fill="currentColor"><circle cx="4" cy="6" r="3" fill="none" stroke="currentColor" stroke-width="2"/><path d="M12 12a3.500 3.500 0 1 1 7 0c0 4-2 6-5 8l-1-1c2-1 3-2 3-4-2 0-4-1-4-3z"/></svg>
      <svg class="w-[26px] h-[20px]" viewBox="0 0 26 20"><rect width="26" height="20" rx="2" fill="currentColor"/><path d="M3 5h4M9 5h3M14 5h3M19 5h4M3 9h4M9 9h3M14 9h3M19 9h4M3 15h3M8 15h10M20 15h3" stroke="#fff" stroke-width="2.500"/></svg>
      <svg class="w-[19px] h-[22px]" viewBox="0 0 19 22" fill="currentColor"><circle cx="9.500" cy="5" r="5"/><path d="M5 10h9c4 1 5 3 5 7l-4-1v6H4v-6l-4 1c0-4 1-6 5-7z"/></svg>
      <svg class="w-[21px] h-[22px]" viewBox="0 0 21 22" fill="currentColor"><path d="M10 10H5a5 5 0 1 1 5-5zM10 12v5a5 5 0 1 1-5-5z"/><path d="M11 12h5a5 5 0 1 1-5 5z"/><path d="M12 9V5a4 4 0 1 1 4 4z" fill="none" stroke="currentColor" stroke-width="2"/></svg>
    </div>
    <span class="absolute right-[512px] bottom-[5px] w-16 h-[3px] bg-[#bcc8d4]"></span>

    <svg class="absolute right-[13px] top-[400px] w-[21px] h-[31px]" viewBox="0 0 21 31"><path d="M1 1v26l6-6 4 9 4-2-4-8h9z" fill="#fff" stroke="#222" stroke-width="1.300"/></svg>

    <span class="absolute right-full bottom-1 -mr-[10px] bg-black text-white text-[12px] leading-[15px] whitespace-nowrap">程新生的共享屏幕</span>
  </main>

  <!-- player controls -->
  <footer class="px-5 pt-[71px] text-[#c8c8c8]">
    <div class="relative h-[18px] flex items-center">
      <div id="chapters" class="w-full flex gap-[3px]"></div>
      <span class="absolute size-[10px] rounded-full bg-white -ml-[5px]" style="left:22.030%"></span>
      <span class="absolute size-[10px] rounded-full bg-white -ml-[5px]" style="left:99%"></span>
      <input type="range" aria-label="播放进度" max="10000" value="2407" class="absolute inset-0 w-full h-[18px] appearance-none bg-transparent [&::-webkit-slider-thumb]:appearance-none [&::-webkit-slider-thumb]:size-[18px] [&::-webkit-slider-thumb]:rounded-full [&::-webkit-slider-thumb]:bg-white">
    </div>
    <div class="flex items-center h-10 mt-[9px] pl-[5px] pr-[11px]">
      <button aria-label="播放"><svg class="w-[21px] h-[26px]" viewBox="0 0 21 26" fill="currentColor"><path d="M0 2q0-2 2-1l18 11q1 1 0 2L2 25q-2 1-2-1z"/></svg></button>
      <button aria-label="后退5秒" class="ml-[30px]"><svg class="w-7 h-7" viewBox="0 0 28 28" fill="none" stroke="currentColor" stroke-width="2.600"><path d="M1.500 2v10h5M3 9.500A12.500 12.500 0 1 1 4 21"/><text x="9.500" y="19.500" font-family="Liberation Sans" font-size="15" fill="currentColor" stroke="none">5</text></svg></button>
      <button aria-label="前进5秒" class="ml-[26px]"><svg class="w-7 h-7" viewBox="0 0 28 28" fill="none" stroke="currentColor" stroke-width="2.600"><path d="M26.500 2v10h-5M25 9.500A12.500 12.500 0 1 0 24 21"/><text x="10" y="19.500" font-family="Liberation Sans" font-size="15" fill="currentColor" stroke="none">5</text></svg></button>
      <button aria-label="音量" class="ml-[27px]"><svg class="w-[27px] h-6" viewBox="0 0 27 24"><path d="M0 8q0-2 2-2h5l8-6q2 0 2 2v20q0 2-2 2l-8-6H2q-2 0-2-2z" fill="currentColor"/><path d="M20 8q3 4 0 8M23 5q6 7 0 14" fill="none" stroke="currentColor" stroke-width="1.800"/></svg></button>
      <span class="ml-[22px] text-[18px] font-['Liberation_Sans',sans-serif]">15:44 / 1:03:56</span>
      <button class="ml-auto text-[21px] font-bold">倍速</button>
      <button class="ml-[19px] w-[34px] h-7 rounded bg-[#c8c8c8] text-black text-[18px] font-bold">CC</button>
      <button aria-label="画中画" class="ml-4"><svg class="w-7 h-[26px]" viewBox="0 0 28 26" fill="none" stroke="currentColor" stroke-width="2.500"><path d="M9 24H3q-2 0-2-2V3q0-2 2-2h21q2 0 2 2v11"/><rect x="13" y="16" width="15" height="10" rx="2" fill="currentColor" stroke="none"/></svg></button>
      <button aria-label="退出全屏" class="ml-[26px]"><svg class="w-[25px] h-[25px]" viewBox="0 0 25 25" fill="none" stroke="currentColor" stroke-width="2.800"><path d="M0 8.500h8.500V0M16.500 0v8.500H25M0 16.500h8.500V25M16.500 25v-8.500H25"/></svg></button>
    </div>
  </footer>

  <script>
    // length, played %, buffered % of every chapter
    const chapters = [
      [192, 100, 100], [469, 68, 100], [233, 0, 100], [227, 0, 100],
      [233, 0, 100], [226, 0, 100], [249, 0, 100], [267, 0, 43.4]
    ];
    document.getElementById('chapters').innerHTML = chapters.map(([length, played, buffered]) => `
      <div class="relative h-[6px] rounded-full overflow-hidden bg-[#4d4d4d]" style="flex:${length} 1 0">
        <div class="absolute inset-y-0 left-0 rounded-full bg-[#b5b5b5]" style="width:${buffered}%"></div>
        <div class="absolute inset-y-0 left-0 bg-white" style="width:${played}%"></div>
      </div>`).join('');
  </script>
</body>
</html>
